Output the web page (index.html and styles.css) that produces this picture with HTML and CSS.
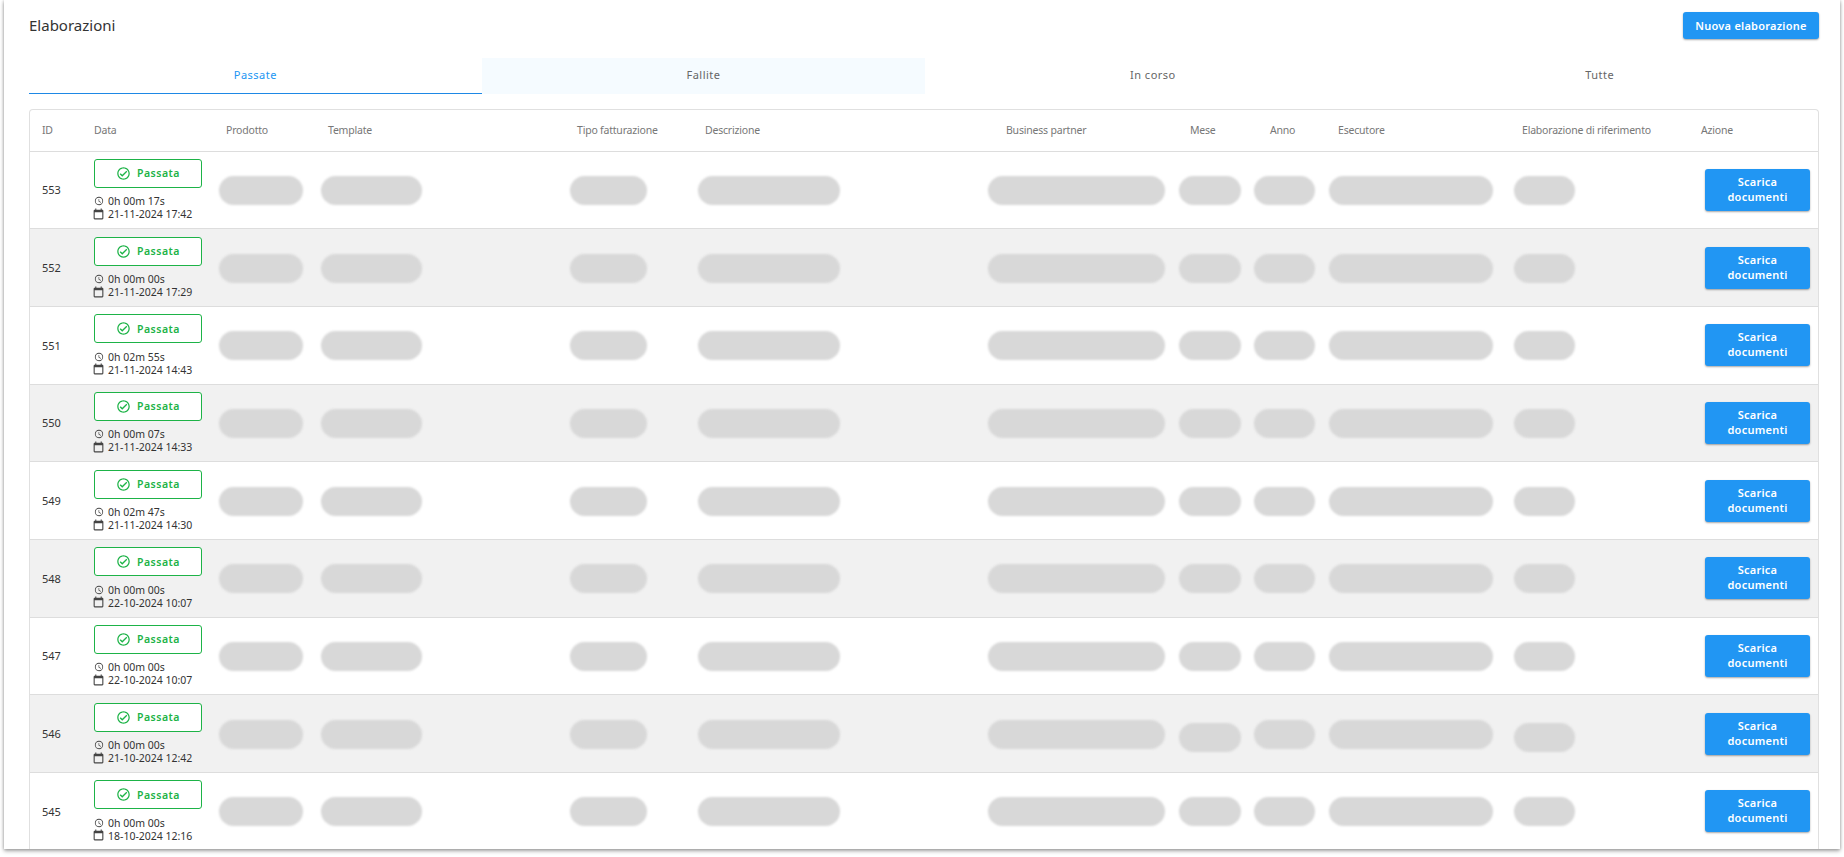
FILE: index.html
```html
<!DOCTYPE html>
<html lang="it">
<head>
    <meta charset="UTF-8">
    <title>Elaborazioni</title>
    <link rel="stylesheet" href="styles.css">
</head>
<body>
<svg class="icon-defs" aria-hidden="true">
    <symbol id="i-check" viewBox="0 0 24 24"><path d="M12 2C6.5 2 2 6.5 2 12S6.5 22 12 22 22 17.5 22 12 17.5 2 12 2M12 20C7.59 20 4 16.41 4 12S7.59 4 12 4 20 7.59 20 12 16.41 20 12 20M16.59 7.58L10 14.17L7.41 11.59L6 13L10 17L18 9L16.59 7.58Z"/></symbol>
    <symbol id="i-clock" viewBox="0 0 24 24"><path d="M12,20A8,8 0 0,0 20,12A8,8 0 0,0 12,4A8,8 0 0,0 4,12A8,8 0 0,0 12,20M12,2A10,10 0 0,1 22,12A10,10 0 0,1 12,22C6.47,22 2,17.5 2,12A10,10 0 0,1 12,2M12.5,7V12.25L17,14.92L16.25,16.15L11,13V7H12.5Z"/></symbol>
    <symbol id="i-cal" viewBox="0 0 24 24"><path d="M19 19H5V8H19M16 1V3H8V1H6V3H5C3.89 3 3 3.89 3 5V19A2 2 0 0 0 5 21H19A2 2 0 0 0 21 19V5C21 3.89 20.1 3 19 3H18V1"/></symbol>
</svg>

<div class="card">
    <div class="card-header">
        <h1 class="card-title">Elaborazioni</h1>
        <button class="btn btn-new">Nuova elaborazione</button>
    </div>

    <div class="tabs">
        <a class="tab active">Passate</a>
        <a class="tab hover">Fallite</a>
        <a class="tab">In corso</a>
        <a class="tab">Tutte</a>
    </div>

    <div class="table-wrap">
        <table class="runs">
            <thead>
            <tr>
                <th>ID</th>
                <th>Data</th>
                <th>Prodotto</th>
                <th>Template</th>
                <th>Tipo fatturazione</th>
                <th>Descrizione</th>
                <th>Business partner</th>
                <th>Mese</th>
                <th>Anno</th>
                <th>Esecutore</th>
                <th>Elaborazione di riferimento</th>
                <th>Azione</th>
            </tr>
            </thead>
            <tbody>
            <tr>
                <td>553</td>
                <td><div class="badge"><svg class="ic-check"><use href="#i-check"/></svg>Passata</div><div class="meta"><svg class="ic-clock"><use href="#i-clock"/></svg>0h 00m 17s</div><div class="meta"><svg class="ic-cal"><use href="#i-cal"/></svg>21-11-2024 17:42</div></td>
                <td><span class="pill"></span></td><td><span class="pill"></span></td><td><span class="pill"></span></td><td><span class="pill"></span></td><td><span class="pill"></span></td><td><span class="pill"></span></td><td><span class="pill"></span></td><td><span class="pill"></span></td><td><span class="pill"></span></td>
                <td><button class="btn btn-doc">Scarica documenti</button></td>
            </tr>
            <tr>
                <td>552</td>
                <td><div class="badge"><svg class="ic-check"><use href="#i-check"/></svg>Passata</div><div class="meta"><svg class="ic-clock"><use href="#i-clock"/></svg>0h 00m 00s</div><div class="meta"><svg class="ic-cal"><use href="#i-cal"/></svg>21-11-2024 17:29</div></td>
                <td><span class="pill"></span></td><td><span class="pill"></span></td><td><span class="pill"></span></td><td><span class="pill"></span></td><td><span class="pill"></span></td><td><span class="pill"></span></td><td><span class="pill"></span></td><td><span class="pill"></span></td><td><span class="pill"></span></td>
                <td><button class="btn btn-doc">Scarica documenti</button></td>
            </tr>
            <tr>
                <td>551</td>
                <td><div class="badge"><svg class="ic-check"><use href="#i-check"/></svg>Passata</div><div class="meta"><svg class="ic-clock"><use href="#i-clock"/></svg>0h 02m 55s</div><div class="meta"><svg class="ic-cal"><use href="#i-cal"/></svg>21-11-2024 14:43</div></td>
                <td><span class="pill"></span></td><td><span class="pill"></span></td><td><span class="pill"></span></td><td><span class="pill"></span></td><td><span class="pill"></span></td><td><span class="pill"></span></td><td><span class="pill"></span></td><td><span class="pill"></span></td><td><span class="pill"></span></td>
                <td><button class="btn btn-doc">Scarica documenti</button></td>
            </tr>
            <tr>
                <td>550</td>
                <td><div class="badge"><svg class="ic-check"><use href="#i-check"/></svg>Passata</div><div class="meta"><svg class="ic-clock"><use href="#i-clock"/></svg>0h 00m 07s</div><div class="meta"><svg class="ic-cal"><use href="#i-cal"/></svg>21-11-2024 14:33</div></td>
                <td><span class="pill"></span></td><td><span class="pill"></span></td><td><span class="pill"></span></td><td><span class="pill"></span></td><td><span class="pill"></span></td><td><span class="pill"></span></td><td><span class="pill"></span></td><td><span class="pill"></span></td><td><span class="pill"></span></td>
                <td><button class="btn btn-doc">Scarica documenti</button></td>
            </tr>
            <tr>
                <td>549</td>
                <td><div class="badge"><svg class="ic-check"><use href="#i-check"/></svg>Passata</div><div class="meta"><svg class="ic-clock"><use href="#i-clock"/></svg>0h 02m 47s</div><div class="meta"><svg class="ic-cal"><use href="#i-cal"/></svg>21-11-2024 14:30</div></td>
                <td><span class="pill"></span></td><td><span class="pill"></span></td><td><span class="pill"></span></td><td><span class="pill"></span></td><td><span class="pill"></span></td><td><span class="pill"></span></td><td><span class="pill"></span></td><td><span class="pill"></span></td><td><span class="pill"></span></td>
                <td><button class="btn btn-doc">Scarica documenti</button></td>
            </tr>
            <tr>
                <td>548</td>
                <td><div class="badge"><svg class="ic-check"><use href="#i-check"/></svg>Passata</div><div class="meta"><svg class="ic-clock"><use href="#i-clock"/></svg>0h 00m 00s</div><div class="meta"><svg class="ic-cal"><use href="#i-cal"/></svg>22-10-2024 10:07</div></td>
                <td><span class="pill"></span></td><td><span class="pill"></span></td><td><span class="pill"></span></td><td><span class="pill"></span></td><td><span class="pill"></span></td><td><span class="pill"></span></td><td><span class="pill"></span></td><td><span class="pill"></span></td><td><span class="pill"></span></td>
                <td><button class="btn btn-doc">Scarica documenti</button></td>
            </tr>
            <tr>
                <td>547</td>
                <td><div class="badge"><svg class="ic-check"><use href="#i-check"/></svg>Passata</div><div class="meta"><svg class="ic-clock"><use href="#i-clock"/></svg>0h 00m 00s</div><div class="meta"><svg class="ic-cal"><use href="#i-cal"/></svg>22-10-2024 10:07</div></td>
                <td><span class="pill"></span></td><td><span class="pill"></span></td><td><span class="pill"></span></td><td><span class="pill"></span></td><td><span class="pill"></span></td><td><span class="pill"></span></td><td><span class="pill"></span></td><td><span class="pill"></span></td><td><span class="pill"></span></td>
                <td><button class="btn btn-doc">Scarica documenti</button></td>
            </tr>
            <tr>
                <td>546</td>
                <td><div class="badge"><svg class="ic-check"><use href="#i-check"/></svg>Passata</div><div class="meta"><svg class="ic-clock"><use href="#i-clock"/></svg>0h 00m 00s</div><div class="meta"><svg class="ic-cal"><use href="#i-cal"/></svg>21-10-2024 12:42</div></td>
                <td><span class="pill"></span></td><td><span class="pill"></span></td><td><span class="pill"></span></td><td><span class="pill"></span></td><td><span class="pill"></span></td><td><span class="pill low"></span></td><td><span class="pill"></span></td><td><span class="pill"></span></td><td><span class="pill low"></span></td>
                <td><button class="btn btn-doc">Scarica documenti</button></td>
            </tr>
            <tr>
                <td>545</td>
                <td><div class="badge"><svg class="ic-check"><use href="#i-check"/></svg>Passata</div><div class="meta"><svg class="ic-clock"><use href="#i-clock"/></svg>0h 00m 00s</div><div class="meta"><svg class="ic-cal"><use href="#i-cal"/></svg>18-10-2024 12:16</div></td>
                <td><span class="pill"></span></td><td><span class="pill"></span></td><td><span class="pill"></span></td><td><span class="pill"></span></td><td><span class="pill"></span></td><td><span class="pill"></span></td><td><span class="pill"></span></td><td><span class="pill"></span></td><td><span class="pill"></span></td>
                <td><button class="btn btn-doc">Scarica documenti</button></td>
            </tr>
            </tbody>
        </table>
    </div>
</div>
</body>
</html>
```

FILE: styles.css
```css
* {
    box-sizing: border-box;
}

html, body {
    height: 100%;
}

body {
    margin: 0;
    padding: 0 4px 8px;
    background: #fff;
    overflow: hidden;
    font-family: "Noto Sans", "Open Sans", sans-serif;
    color: #333;
}

.icon-defs {
    display: none;
}

.card {
    height: 100%;
    padding: 12px 21px 0 25px;
    background: #fff;
    overflow: hidden;
    box-shadow: 0 2px 4px rgba(0, 0, 0, .35), 0 0 3px rgba(0, 0, 0, .2);
}

.card-header {
    display: flex;
    justify-content: space-between;
    align-items: center;
    height: 27px;
}

.card-title {
    margin: 0 0 1px;
    font-size: 15px;
    font-weight: 400;
    color: #333;
}

.btn {
    border: 0;
    border-radius: 3px;
    background: #2196f3;
    color: #fff;
    font-family: inherit;
    font-size: 11px;
    font-weight: 600;
    letter-spacing: .25px;
    box-shadow: 0 1px 2px rgba(0, 0, 0, .35);
}

.btn-new {
    width: 136px;
    height: 27px;
    padding: 0;
}

.btn-doc {
    display: block;
    width: 105px;
    height: 42px;
    margin-left: 4px;
    padding: 0 10px 2px;
    line-height: 15px;
}

.tabs {
    display: flex;
    margin-top: 19px;
    height: 36px;
    font-size: 11px;
    letter-spacing: .5px;
    color: #666;
}

.tab {
    flex: 1 1 auto;
    display: flex;
    justify-content: center;
    align-items: center;
    padding-bottom: 3px;
}

.tab.active {
    color: #2196f3;
    border-bottom: 1px solid #1e88e5;
}

.tab.hover {
    background: #f5fbff;
}

.table-wrap {
    margin-top: 15px;
    border: 1px solid #e0e0e0;
    border-bottom: 0;
    border-radius: 4px 4px 0 0;
    overflow: hidden;
}

.runs {
    width: 100%;
    border-collapse: collapse;
    table-layout: fixed;
    font-size: 11px;
}

.runs th {
    height: 41px;
    padding: 0 0 0 7px;
    text-align: left;
    font-size: 10.5px;
    font-weight: 400;
    letter-spacing: -.2px;
    color: #777;
    white-space: nowrap;
    border-bottom: 1px solid #ddd;
}

.runs td {
    height: 77.7px;
    padding: 0;
    border-bottom: 1px solid #ddd;
    vertical-align: middle;
    color: #333;
}

.runs tbody tr:nth-child(even) {
    background: #f1f1f1;
}

/* colonne */
.runs th:nth-child(1), .runs td:nth-child(1) { width: 64px; }
.runs th:nth-child(2), .runs td:nth-child(2) { width: 125px; }
.runs th:nth-child(3), .runs td:nth-child(3) { width: 102px; }
.runs th:nth-child(4), .runs td:nth-child(4) { width: 249px; }
.runs th:nth-child(5), .runs td:nth-child(5) { width: 128px; }
.runs th:nth-child(6), .runs td:nth-child(6) { width: 290px; }
.runs th:nth-child(7), .runs td:nth-child(7) { width: 191px; }
.runs th:nth-child(8), .runs td:nth-child(8) { width: 75px; }
.runs th:nth-child(9), .runs td:nth-child(9) { width: 75px; }
.runs th:nth-child(10), .runs td:nth-child(10) { width: 185px; }
.runs th:nth-child(11), .runs td:nth-child(11) { width: 187px; }

.runs th:nth-child(1) { padding-left: 12px; }
.runs td:nth-child(1) { padding-left: 12px; }
.runs th:nth-child(2) { padding-left: 0; }
.runs th:nth-child(7) { padding-left: 18px; }
.runs th:nth-child(8) { padding-left: 11px; }
.runs th:nth-child(9) { padding-left: 16px; }
.runs th:nth-child(10) { padding-left: 9px; }
.runs th:nth-child(11) { padding-left: 8px; }
.runs th:nth-child(12) { padding-left: 0; }

.pill {
    display: block;
    height: 29px;
    margin-top: 1px;
    border-radius: 15px;
    background: #d8d8d8;
    filter: blur(1px);
}

.pill.low {
    position: relative;
    top: 3px;
}

.runs td:nth-child(3) .pill { width: 84px; }
.runs td:nth-child(4) .pill { width: 101px; }
.runs td:nth-child(5) .pill { width: 77px; }
.runs td:nth-child(6) .pill { width: 142px; }
.runs td:nth-child(7) .pill { width: 177px; }
.runs td:nth-child(8) .pill { width: 62px; }
.runs td:nth-child(9) .pill { width: 61px; }
.runs td:nth-child(10) .pill { width: 164px; }
.runs td:nth-child(11) .pill { width: 61px; }

.badge {
    display: flex;
    justify-content: center;
    align-items: center;
    width: 108px;
    height: 29px;
    margin-bottom: 7px;
    border: 1px solid #1db347;
    border-radius: 3px;
    background: #fff;
    color: #1db347;
    font-size: 10.5px;
    font-weight: 600;
    letter-spacing: .5px;
}

.ic-check {
    width: 15px;
    height: 15px;
    margin-right: 6px;
    fill: #1db347;
}

.meta {
    display: flex;
    align-items: center;
    height: 13px;
    font-size: 10.5px;
    color: #333;
}

.ic-clock, .ic-cal {
    fill: #444;
}

.ic-clock {
    width: 10px;
    height: 10px;
    margin-right: 4px;
}

.ic-cal {
    width: 13px;
    height: 13px;
    margin-left: -2px;
    margin-right: 3px;
}
```
